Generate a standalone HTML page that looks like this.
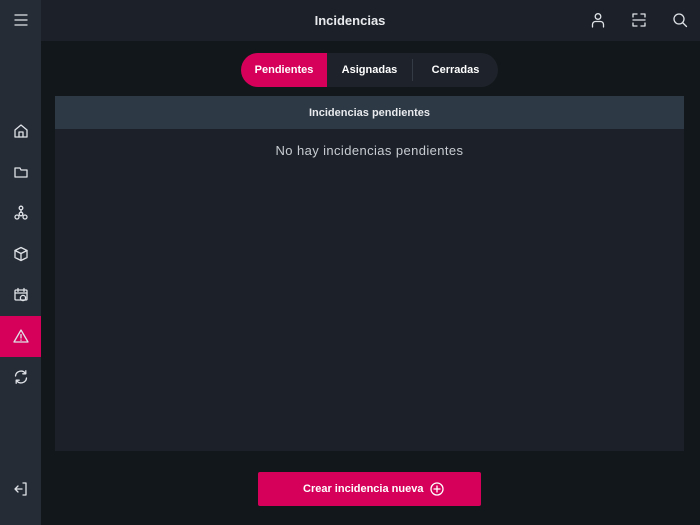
<!DOCTYPE html>
<html><head><meta charset="utf-8"><style>
*{margin:0;padding:0;box-sizing:border-box}
body{width:700px;height:525px;background:#12171b;font-family:"Liberation Sans",sans-serif;position:relative;overflow:hidden;color:#fff}
.side{position:absolute;left:0;top:0;width:41px;height:525px;background:#262c36}
.hdr{position:absolute;left:41px;top:0;width:659px;height:41px;background:#1c2129}
.title{position:absolute;left:0;width:700px;top:13px;text-align:center;font-size:13px;font-weight:bold;color:#e8eaed}
.ic{position:absolute;width:16px;height:16px}
svg{fill:none;stroke:#dfe3e8;stroke-width:1.3;stroke-linecap:round;stroke-linejoin:round}
.tabs{position:absolute;left:241px;top:53px;width:257px;height:34px;border-radius:17px;background:#1e232b;font-size:11px;font-weight:bold}
.tabs div{position:absolute;top:0;height:34px;line-height:35px;text-align:center}
.panel{position:absolute;left:55px;top:96px;width:629px;height:355px;background:#1c2129}
.ph{height:33px;background:#2d3945;text-align:center;line-height:34px;font-size:11px;font-weight:bold;color:#e8eaed}
.empty{text-align:center;margin-top:14px;font-size:13px;color:#c8ccd2;letter-spacing:0.4px}
.btn{position:absolute;left:258px;top:472px;width:223px;height:34px;background:#d6005a;border-radius:2px;font-size:11px;font-weight:bold;line-height:35px;padding-left:45px}
</style></head><body>
<div class="side">
<svg class="ic" style="left:13px;top:12px" viewBox="0 0 16 16"><path d="M2 3h12M2 8h12M2 13h12"/></svg>
<svg class="ic" style="left:13px;top:123px" viewBox="0 0 16 16"><path d="M2 7l6-5 6 5v7H2z"/><path d="M6 14V9h4v5"/></svg>
<svg class="ic" style="left:13px;top:164px" viewBox="0 0 16 16"><path d="M2 4h5l1 2h6v7H2z"/></svg>
<svg class="ic" style="left:13px;top:205px" viewBox="0 0 16 16"><circle cx="8" cy="3" r="1.8"/><circle cx="4" cy="12" r="2"/><circle cx="12" cy="12" r="2"/><circle cx="8" cy="9" r="1.8"/><path d="M8 5v2"/></svg>
<svg class="ic" style="left:13px;top:246px" viewBox="0 0 16 16"><path d="M8 1.5l6 3v7l-6 3-6-3v-7z"/><path d="M2 4.5l6 3 6-3M8 7.5v7"/></svg>
<svg class="ic" style="left:13px;top:287px" viewBox="0 0 16 16"><rect x="2" y="3" width="12" height="10" rx="1"/><path d="M2 6h12M5 1.5v3M11 1.5v3"/><circle cx="10" cy="11" r="2.6"/></svg>
<div style="position:absolute;left:0;top:316px;width:41px;height:41px;background:#d6005a"></div>
<svg class="ic" style="left:13px;top:328px" viewBox="0 0 16 16"><path d="M8 2l7 12H1z"/><path d="M8 6.5v3.5M8 12v.3"/></svg>
<svg class="ic" style="left:13px;top:369px" viewBox="0 0 16 16"><path d="M2.5 7a5.5 5.5 0 0 1 10-2.5M13.5 9a5.5 5.5 0 0 1-10 2.5"/><path d="M12.8 1.8v3h-3M3.2 14.2v-3h3"/></svg>
<svg class="ic" style="left:13px;top:481px" viewBox="0 0 16 16"><path d="M10 2h3v12h-3M9 8H2M5 5L2 8l3 3"/></svg>
</div>
<div class="hdr"></div>
<div class="title">Incidencias</div>
<svg class="ic" style="left:590px;top:12px" viewBox="0 0 16 16"><circle cx="8" cy="4.5" r="2.8"/><path d="M2.5 15v-2.5a3 3 0 0 1 3-3h5a3 3 0 0 1 3 3V15"/></svg>
<svg class="ic" style="left:631px;top:12px" viewBox="0 0 16 16"><path d="M2 5V2h4M10 2h4v3M2 11v3h4M10 14h4v-3M2 8h12"/></svg>
<svg class="ic" style="left:672px;top:12px" viewBox="0 0 16 16"><circle cx="7" cy="7" r="5"/><path d="M11 11l3.5 3.5"/></svg>
<div class="tabs">
<div style="left:0;width:86px;background:#d6005a;border-radius:17px 0 0 17px">Pendientes</div>
<div style="left:86px;width:85px">Asignadas</div>
<div style="left:171px;top:6px;height:22px;width:1px;background:#343b45"></div>
<div style="left:172px;width:85px">Cerradas</div>
</div>
<div class="panel"><div class="ph">Incidencias pendientes</div><div class="empty">No hay incidencias pendientes</div></div>
<div class="btn">Crear incidencia nueva
<svg style="position:absolute;left:172px;top:10px;width:14px;height:14px" viewBox="0 0 14 14"><circle cx="7" cy="7" r="6" stroke="#fff"/><path d="M7 4v6M4 7h6" stroke="#fff"/></svg></div>
</body></html>
